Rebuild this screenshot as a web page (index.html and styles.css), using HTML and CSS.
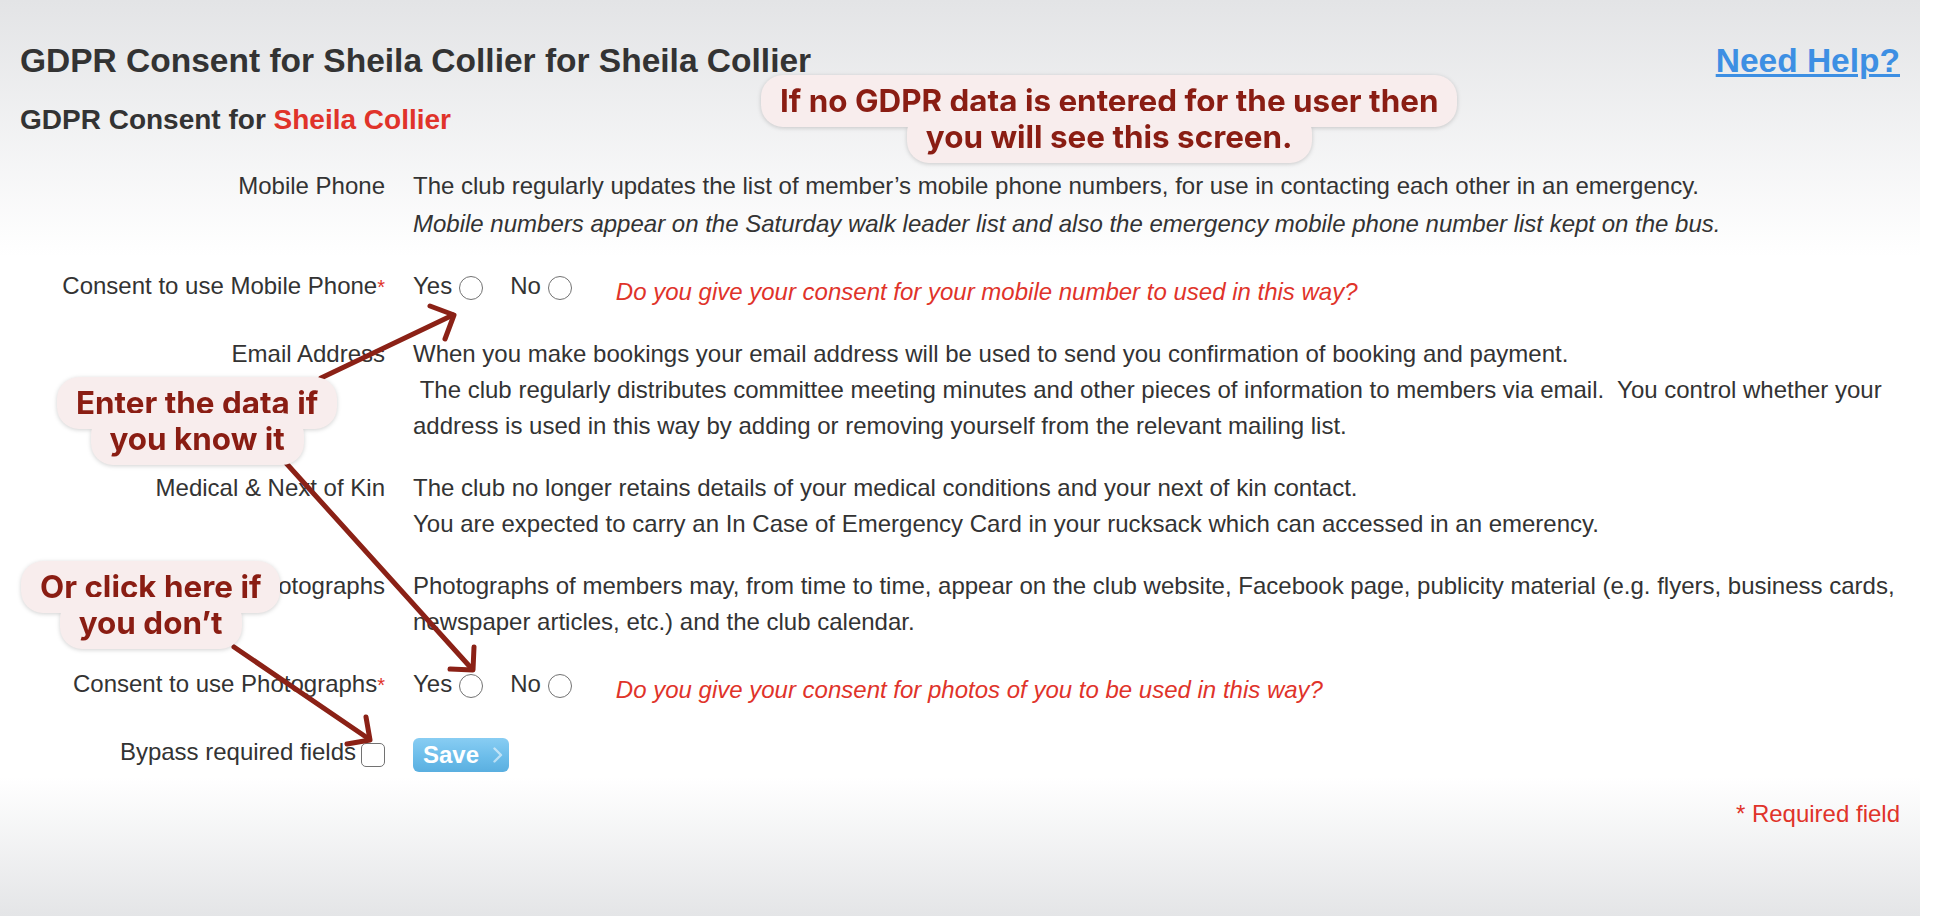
FILE: index.html
```html
<!DOCTYPE html>
<html lang="en">
<head>
<meta charset="utf-8">
<title>GDPR Consent</title>
<link rel="stylesheet" href="styles.css">
</head>
<body>
<div class="page">
  <header class="top">
    <h1 class="title">GDPR Consent for Sheila Collier for Sheila Collier</h1>
    <a class="help" href="#">Need Help?</a>
  </header>
  <h2 class="subtitle">GDPR Consent for <span class="name">Sheila Collier</span></h2>

  <form class="form">
    <div class="label">Mobile Phone</div>
    <div class="field">The club regularly updates the list of member’s mobile phone numbers, for use in contacting each other in an emergency.<i class="note">Mobile numbers appear on the Saturday walk leader list and also the emergency mobile phone number list kept on the bus.</i></div>

    <div class="label">Consent to use Mobile Phone<span class="req">*</span></div>
    <div class="field choice">
      <label class="opt">Yes<input class="radio" type="radio" name="mobile"></label>
      <label class="opt">No<input class="radio" type="radio" name="mobile"></label>
      <span class="ask">Do you give your consent for your mobile number to used in this way?</span>
    </div>

    <div class="label">Email Address</div>
    <div class="field">When you make bookings your email address will be used to send you confirmation of booking and payment.<br>&nbsp;The club regularly distributes committee meeting minutes and other pieces of information to members via email.&nbsp; You control whether your address is used in this way by adding or removing yourself from the relevant mailing list.</div>

    <div class="label">Medical &amp; Next of Kin</div>
    <div class="field">The club no longer retains details of your medical conditions and your next of kin contact.<br>You are expected to carry an In Case of Emergency Card in your rucksack which can accessed in an emerency.</div>

    <div class="label">Photographs</div>
    <div class="field">Photographs of members may, from time to time, appear on the club website, Facebook page, publicity material (e.g. flyers, business cards, newspaper articles, etc.) and the club calendar.</div>

    <div class="label">Consent to use Photographs<span class="req">*</span></div>
    <div class="field choice">
      <label class="opt">Yes<input class="radio" type="radio" name="photos"></label>
      <label class="opt">No<input class="radio" type="radio" name="photos"></label>
      <span class="ask">Do you give your consent for photos of you to be used in this way?</span>
    </div>

    <div class="label bypass">Bypass required fields<input class="check" type="checkbox"></div>
    <div class="field">
      <button class="save" type="button">Save<svg class="chev" width="10" height="16" viewBox="0 0 10 16"><polyline points="1.5,1.5 8,8 1.5,14.5" fill="none" stroke="#ffffff" stroke-opacity="0.55" stroke-width="2.4" stroke-linecap="round" stroke-linejoin="round"/></svg></button>
    </div>
  </form>

  <p class="required">* Required field</p>

  <svg class="arrows" width="1920" height="916" viewBox="0 0 1920 916">
    <g fill="none" stroke="#8b2116" stroke-width="5" stroke-linecap="round" stroke-linejoin="round">
      <line x1="321" y1="378" x2="453" y2="315"/>
      <polyline points="430,306 454,315 445,339"/>
      <line x1="286" y1="463" x2="472" y2="669"/>
      <polyline points="474,647 473,670 450,669"/>
      <line x1="234" y1="647" x2="369" y2="739"/>
      <polyline points="366,717 370,740 347,744"/>
    </g>
  </svg>

  <div class="callout c1"><div class="ln">If no GDPR data is entered for the user then</div><div class="ln">you will see this screen.</div></div>
  <div class="callout c2"><div class="ln">Enter the data if</div><div class="ln">you know it</div></div>
  <div class="callout c3"><div class="ln">Or click here if</div><div class="ln">you don’t</div></div>
</div>
</body>
</html>
```

FILE: styles.css
```css
* { box-sizing: border-box; }
html, body { margin: 0; padding: 0; }
body {
  background: #ffffff;
  font-family: "Liberation Sans", Arial, Helvetica, sans-serif;
  font-size: 24px;
  color: #333333;
}
.page {
  position: relative;
  width: 1920px;
  height: 916px;
  overflow: hidden;
  padding: 41px 20px 0 20px;
  background: linear-gradient(to bottom, #e3e4e6 0px, #ffffff 257px, #ffffff 777px, #e4e5e7 916px);
}
.top {
  display: flex;
  justify-content: space-between;
  align-items: baseline;
}
.title {
  margin: 0;
  font-size: 33.5px;
  line-height: 40px;
  font-weight: 700;
  color: #333333;
}
.help {
  font-size: 33.5px;
  line-height: 40px;
  font-weight: 700;
  color: #3d8fe3;
  text-decoration: underline;
}
.subtitle {
  margin: 22px 0 0 0;
  font-size: 28px;
  line-height: 34px;
  font-weight: 700;
  color: #333333;
}
.name { color: #e0332a; }
.form {
  display: grid;
  grid-template-columns: 365px 1fr;
  column-gap: 28px;
  row-gap: 26px;
  align-items: start;
  margin-top: 31px;
  line-height: 36px;
}
.label {
  text-align: right;
  white-space: nowrap;
}
.note {
  display: block;
  margin-top: 2px;
}
.req {
  color: #e0332a;
  font-size: 20px;
}
.choice {
  display: flex;
  align-items: flex-start;
  min-height: 42px;
}
.opt {
  display: flex;
  align-items: flex-start;
}
.opt + .opt { margin-left: 27px; }
.radio {
  -webkit-appearance: none;
  appearance: none;
  width: 24px;
  height: 24px;
  margin: 8px 0 0 7px;
  border: 1.6px solid #727272;
  border-radius: 50%;
  background: #ffffff;
}
.ask {
  margin-left: 44px;
  padding-top: 6px;
  color: #e0332a;
  font-style: italic;
}
.bypass {
  display: flex;
  justify-content: flex-end;
  align-items: flex-start;
}
.check {
  -webkit-appearance: none;
  appearance: none;
  width: 24px;
  height: 24px;
  margin: 9px 0 0 5px;
  border: 1.6px solid #727272;
  border-radius: 5px;
  background: #ffffff;
}
.save {
  display: inline-flex;
  align-items: center;
  height: 34px;
  margin: 4px 0 0 0;
  padding: 0 6px 0 10px;
  border: 0;
  border-radius: 6px;
  background: linear-gradient(to bottom, #88cdf3 0%, #6cbdea 55%, #5aafe0 100%);
  color: #ffffff;
  font-family: "Liberation Sans", Arial, Helvetica, sans-serif;
  font-size: 24px;
  font-weight: 700;
  line-height: 34px;
}
.chev { margin-left: 14px; }
.required {
  margin: 23px 0 0 0;
  text-align: right;
  color: #e0332a;
  line-height: 36px;
}
.arrows {
  position: absolute;
  left: 0;
  top: 0;
  pointer-events: none;
}
.callout {
  position: absolute;
  display: flex;
  flex-direction: column;
  align-items: center;
  font-family: Inter, "Open Sans", sans-serif;
  font-weight: 700;
  font-size: 31.4px;
  line-height: 30px;
  color: #8a1d13;
  filter: drop-shadow(0 1px 2px rgba(0, 0, 0, 0.18));
}
.callout .ln {
  padding: 11px 19px;
  border-radius: 22px;
  background: #f8eded;
  white-space: nowrap;
}
.callout .ln + .ln { margin-top: -16px; }
.c1 { left: 761px; top: 75px; }
.c2 { left: 57px; top: 377px; }
.c3 { left: 21px; top: 561px; }
```
